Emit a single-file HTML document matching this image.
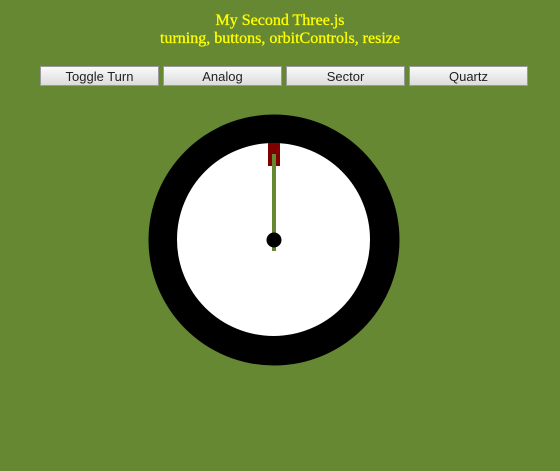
<!DOCTYPE html>
<html><head><style>
html,body{margin:0;padding:0;width:560px;height:471px;background:#668833;overflow:hidden}
.t{position:absolute;left:0;width:560px;text-align:center;color:#ffff00;font-family:"Liberation Serif",serif;font-size:16px;-webkit-text-stroke:0.3px #ffff00}
.b{position:absolute;top:66px;width:119px;height:20px;box-sizing:border-box;border:1px solid #999;background:linear-gradient(#fafafa,#dcdcdc);font-family:"Liberation Sans",sans-serif;font-size:13px;color:#222;text-align:center;line-height:19px}
</style></head><body>
<div class="t" style="top:12px">My Second Three.js</div>
<div class="t" style="top:30px">turning, buttons, orbitControls, resize</div>
<div class="b" style="left:40px">Toggle Turn</div>
<div class="b" style="left:163px">Analog</div>
<div class="b" style="left:286px">Sector</div>
<div class="b" style="left:409px">Quartz</div>
<svg width="560" height="471" style="position:absolute;left:0;top:0">
<circle cx="274" cy="240" r="125.5" fill="#000"/>
<circle cx="273.5" cy="239.5" r="96.5" fill="#fff"/>
<rect x="268" y="143" width="12" height="23" fill="#800000"/>
<rect x="272" y="154" width="4" height="97" fill="#668833"/>
<circle cx="274" cy="240" r="7.5" fill="#000"/>
</svg>
</body></html>
